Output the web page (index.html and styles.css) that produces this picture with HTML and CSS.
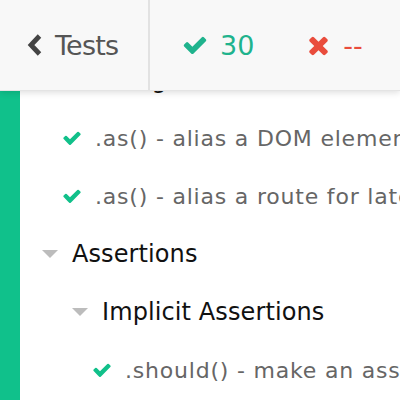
FILE: index.html
```html
<!DOCTYPE html>
<html>
<head>
<meta charset="utf-8">
<link rel="stylesheet" href="styles.css">
</head>
<body>
<div class="app">
  <header class="header">
    <div class="back">
      <svg class="chev" viewBox="0 0 16 24" width="16" height="24"><polyline points="12.5,3 4,12 12.5,21" fill="none" stroke="#444" stroke-width="4.8" stroke-linejoin="miter" stroke-linecap="butt"/></svg>
      <span class="back-label">Tests</span>
    </div>
    <div class="stats">
      <div class="stat passed">
        <svg class="icon-check-lg" viewBox="0 0 1792 1792" width="26" height="26"><path fill="currentColor" d="M1671 566q0 40-28 68l-724 724-136 136q-28 28-68 28t-68-28l-136-136-362-362q-28-28-28-68t28-68l136-136q28-28 68-28t68 28l294 295 656-657q28-28 68-28t68 28l136 136q28 28 28 68z"/></svg>
        <span>30</span>
      </div>
      <div class="stat failed">
        <svg class="icon-x" viewBox="0 0 1408 1792" width="23" height="28"><path fill="currentColor" d="M1298 1322q0 40-28 68l-136 136q-28 28-68 28t-68-28l-294-294-294 294q-28 28-68 28t-68-28l-136-136q-28-28-28-68t28-68l294-294-294-294q-28-28-28-68t28-68l136-136q28-28 68-28t68 28l294 294 294-294q28-28 68-28t68 28l136 136q28 28 28 68t-28 68l-294 294 294 294q28 28 28 68z"/></svg>
        <span>--</span>
      </div>
    </div>
  </header>
  <main class="reporter">
    <ul class="runnables">
      <li class="row suite lvl1"><span class="caret"></span><span class="title">Aliasing</span></li>
      <li class="row test lvl2"><svg class="icon-check" viewBox="0 0 1792 1792" width="20" height="20"><path fill="currentColor" d="M1671 566q0 40-28 68l-724 724-136 136q-28 28-68 28t-68-28l-136-136-362-362q-28-28-28-68t28-68l136-136q28-28 68-28t68 28l294 295 656-657q28-28 68-28t68 28l136 136q28 28 28 68z"/></svg><span class="title">.as() - alias a DOM element for later use</span></li>
      <li class="row test lvl2"><svg class="icon-check" viewBox="0 0 1792 1792" width="20" height="20"><path fill="currentColor" d="M1671 566q0 40-28 68l-724 724-136 136q-28 28-68 28t-68-28l-136-136-362-362q-28-28-28-68t28-68l136-136q28-28 68-28t68 28l294 295 656-657q28-28 68-28t68 28l136 136q28 28 28 68z"/></svg><span class="title">.as() - alias a route for later use</span></li>
      <li class="row suite lvl1"><span class="caret"></span><span class="title">Assertions</span></li>
      <li class="row suite lvl2"><span class="caret"></span><span class="title">Implicit Assertions</span></li>
      <li class="row test lvl3"><svg class="icon-check" viewBox="0 0 1792 1792" width="20" height="20"><path fill="currentColor" d="M1671 566q0 40-28 68l-724 724-136 136q-28 28-68 28t-68-28l-136-136-362-362q-28-28-28-68t28-68l136-136q28-28 68-28t68 28l294 295 656-657q28-28 68-28t68 28l136 136q28 28 28 68z"/></svg><span class="title">.should() - make an assertion about the current subject</span></li>
    </ul>
  </main>
</div>
</body>
</html>
```
FILE: styles.css
```css
* { box-sizing: border-box; }
html, body { margin: 0; padding: 0; }
body {
  width: 400px;
  height: 400px;
  overflow: hidden;
  background: #fff;
  font-family: "DejaVu Sans", Lato, sans-serif;
}
.app {
  position: relative;
  width: 400px;
  height: 400px;
  overflow: hidden;
}
.header {
  position: absolute;
  top: 0;
  left: 0;
  right: 0;
  height: 91px;
  background: #f8f8f8;
  display: flex;
  align-items: stretch;
  box-shadow: 0 2px 6px rgba(0,0,0,0.12);
  border-bottom: 1px solid #e4e4e4;
  z-index: 2;
}
.back {
  width: 150px;
  display: flex;
  align-items: center;
  padding-left: 27px;
  gap: 12px;
  border-right: 2px solid #e2e2e2;
  color: #555;
}
.chev { display: block; }
.back-label {
  font-size: 27px;
  letter-spacing: -0.8px;
  color: #555;
}
.stats {
  display: flex;
  align-items: center;
  padding-left: 32px;
  gap: 53px;
}
.stat {
  display: flex;
  align-items: center;
  gap: 12px;
  font-size: 27px;
}
.stat svg { display: block; }
.passed { color: #1fb38d; }
.failed { color: #e94c3c; gap: 13px; }
.reporter {
  height: 400px;
  border-left: 20px solid #10c18b;
}
.runnables {
  list-style: none;
  margin: 0;
  padding: 51px 0 0 0;
}
.row {
  height: 58px;
  display: flex;
  align-items: center;
  white-space: nowrap;
  font-size: 22px;
  letter-spacing: 0.8px;
}
.suite {
  font-size: 24px;
  letter-spacing: 0.1px;
}
.lvl1 { padding-left: 22px; }
.lvl2 { padding-left: 52px; }
.lvl3 { padding-left: 82px; }
.test.lvl2 { padding-left: 42px; }
.test.lvl3 { padding-left: 72px; }
.suite .title { color: #111; }
.test .title { color: #666; }
.caret {
  width: 0;
  height: 0;
  border-left: 8px solid transparent;
  border-right: 8px solid transparent;
  border-top: 8px solid #bcbcbc;
  margin-right: 14px;
}
.icon-check {
  color: #11c08a;
  margin-right: 13px;
  flex: none;
}
```
